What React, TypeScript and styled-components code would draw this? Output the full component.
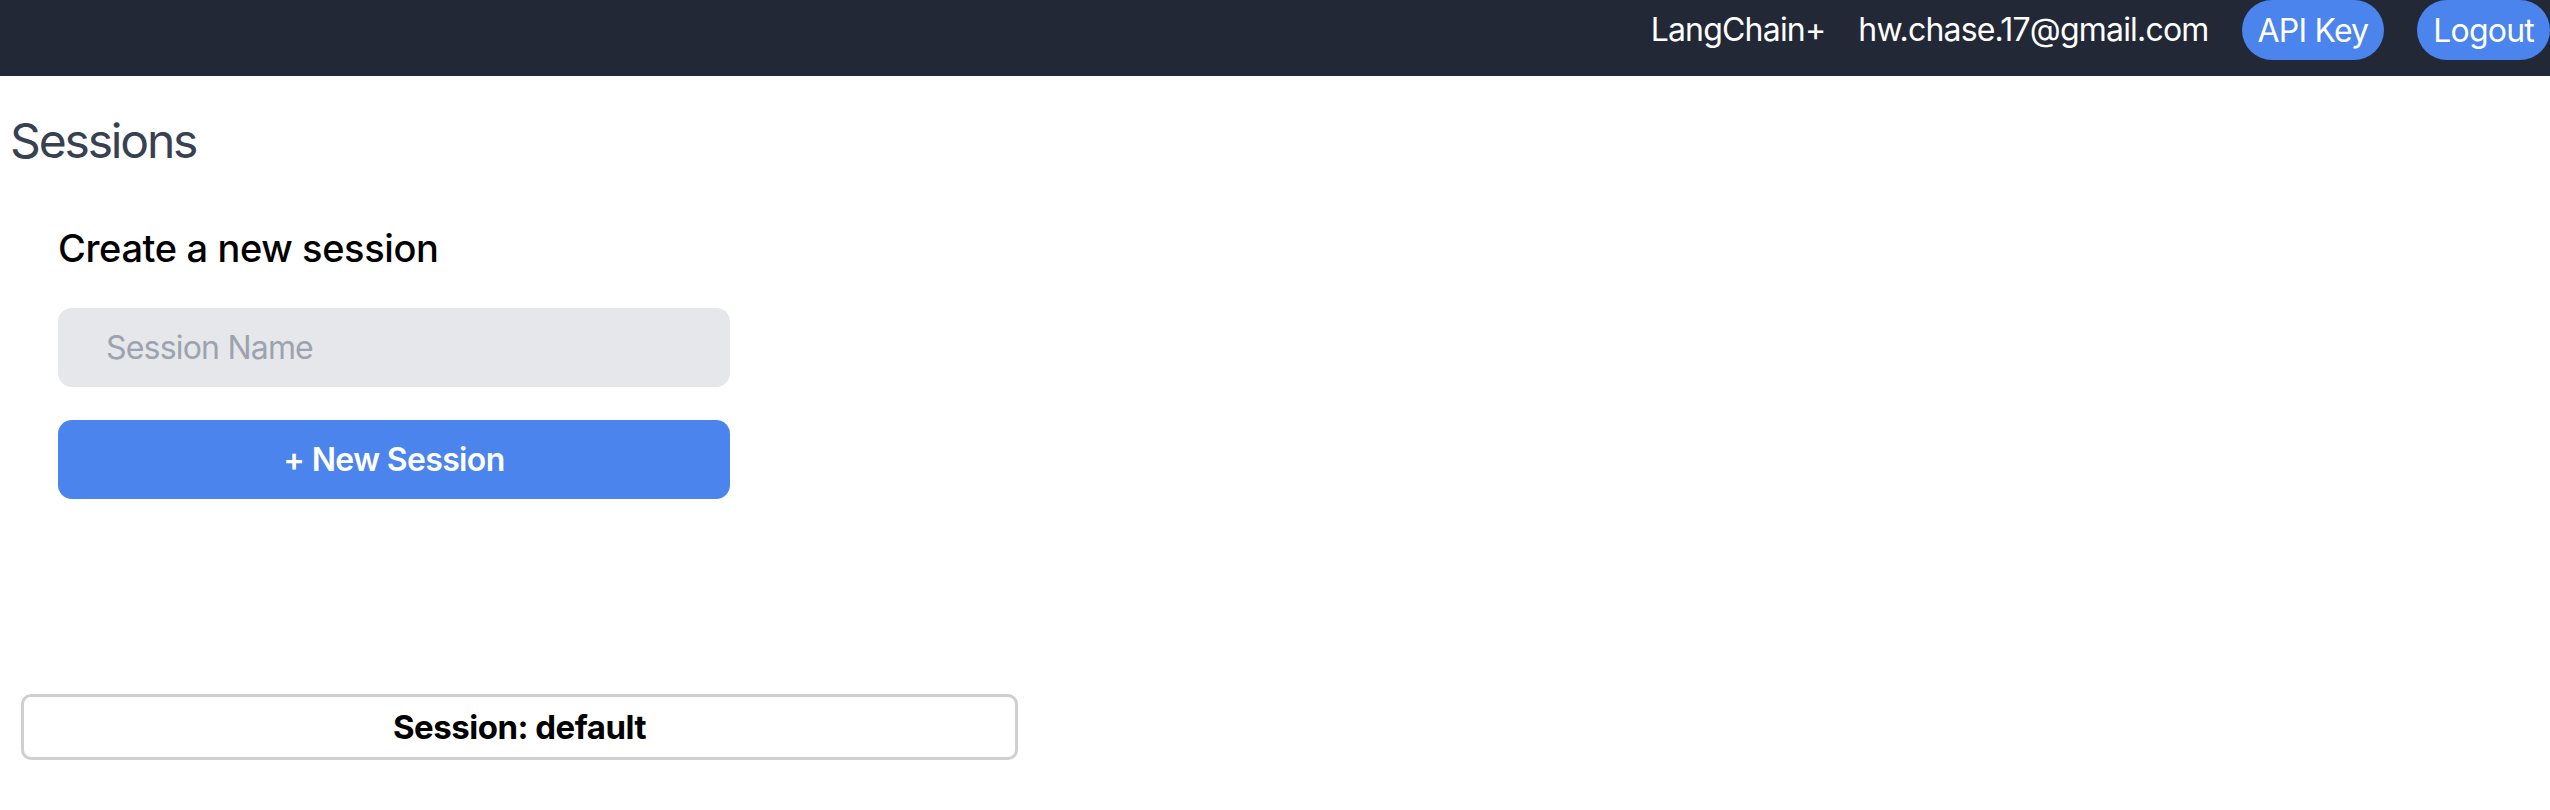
import { useState } from 'react'
import styled, { createGlobalStyle } from 'styled-components'

const GlobalStyle = createGlobalStyle`
  html, body {
    margin: 0;
    padding: 0;
    background: #ffffff;
    font-family: Inter, "Liberation Sans", Arial, sans-serif;
  }

  * {
    box-sizing: border-box;
  }
`

const Header = styled.header`
  height: 76px;
  background: #222836;
  display: flex;
  justify-content: flex-end;
  align-items: flex-start;
  gap: 33px;
`

const NavText = styled.span`
  color: #ffffff;
  font-size: 32px;
  line-height: 60px;
  letter-spacing: -0.025em;
`

const PillButton = styled.button`
  height: 60px;
  padding: 0 16px;
  border: none;
  border-radius: 9999px;
  background: #4a84ec;
  color: #ffffff;
  font-family: inherit;
  font-size: 32px;
  letter-spacing: -0.025em;
  cursor: pointer;
`

const Main = styled.main`
  padding-left: 10px;
`

const PageTitle = styled.h1`
  margin: 33px 0 0;
  font-size: 48px;
  line-height: 64px;
  font-weight: 400;
  color: #374151;
  letter-spacing: -0.045em;
`

const CreateSection = styled.section`
  margin: 51px 0 0 48px;
  width: 672px;
  display: flex;
  flex-direction: column;
`

const SectionTitle = styled.h2`
  margin: 0 0 35px;
  font-size: 38px;
  line-height: 49px;
  font-weight: 500;
  color: #000000;
  letter-spacing: -0.01em;
`

const NameInput = styled.input`
  height: 79px;
  padding: 0 48px;
  border: none;
  border-radius: 14px;
  background: #e5e7eb;
  font-family: inherit;
  font-size: 32px;
  color: #111827;
  letter-spacing: -0.025em;
  outline: none;

  &::placeholder {
    color: #9ca3af;
  }
`

const CreateButton = styled.button`
  margin-top: 33px;
  height: 79px;
  border: none;
  border-radius: 14px;
  background: #4a84ec;
  color: #ffffff;
  font-family: inherit;
  font-size: 32px;
  font-weight: 600;
  letter-spacing: -0.02em;
  cursor: pointer;
`

const SessionBar = styled.div`
  margin: 195px 0 0 11px;
  width: 997px;
  height: 66px;
  border: 3px solid #cfcfcf;
  border-radius: 10px;
  display: flex;
  align-items: center;
  justify-content: center;
  font-size: 33px;
  font-weight: 700;
  color: #000000;
  letter-spacing: -0.015em;
`

export default function App() {
  const [name, setName] = useState('')

  return (
    <>
      <GlobalStyle />
      <Header>
        <NavText>LangChain+</NavText>
        <NavText>hw.chase.17@gmail.com</NavText>
        <PillButton>API Key</PillButton>
        <PillButton>Logout</PillButton>
      </Header>
      <Main>
        <PageTitle>Sessions</PageTitle>
        <CreateSection>
          <SectionTitle>Create a new session</SectionTitle>
          <NameInput
            placeholder="Session Name"
            value={name}
            onChange={(e) => setName(e.target.value)}
          />
          <CreateButton>+ New Session</CreateButton>
        </CreateSection>
        <SessionBar>Session: default</SessionBar>
      </Main>
    </>
  )
}
